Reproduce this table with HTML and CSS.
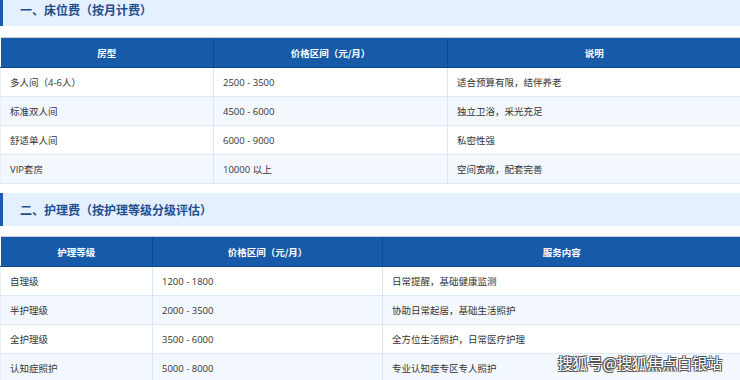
FILE: index.html
```html
<!DOCTYPE html>
<html lang="zh-CN">
<head>
<meta charset="utf-8">
<title>费用</title>
<link rel="stylesheet" href="styles.css">
</head>
<body>
<div class="page">
  <h2 class="section-title first">一、床位费（按月计费）</h2>
  <table class="fee-table t1">
    <colgroup><col class="c1"><col class="c2"><col class="c3"></colgroup>
    <thead><tr><th>房型</th><th>价格区间（元/月）</th><th>说明</th></tr></thead>
    <tbody>
      <tr><td>多人间（4-6人）</td><td>2500 - 3500</td><td>适合预算有限，结伴养老</td></tr>
      <tr><td>标准双人间</td><td>4500 - 6000</td><td>独立卫浴，采光充足</td></tr>
      <tr><td>舒适单人间</td><td>6000 - 9000</td><td>私密性强</td></tr>
      <tr><td>VIP套房</td><td>10000 以上</td><td>空间宽敞，配套完善</td></tr>
    </tbody>
  </table>
  <h2 class="section-title">二、护理费（按护理等级分级评估）</h2>
  <table class="fee-table t2">
    <colgroup><col class="c1"><col class="c2"><col class="c3"></colgroup>
    <thead><tr><th>护理等级</th><th>价格区间（元/月）</th><th>服务内容</th></tr></thead>
    <tbody>
      <tr><td>自理级</td><td>1200 - 1800</td><td>日常提醒，基础健康监测</td></tr>
      <tr><td>半护理级</td><td>2000 - 3500</td><td>协助日常起居，基础生活照护</td></tr>
      <tr><td>全护理级</td><td>3500 - 6000</td><td>全方位生活照护，日常医疗护理</td></tr>
      <tr><td>认知症照护</td><td>5000 - 8000</td><td>专业认知症专区专人照护</td></tr>
    </tbody>
  </table>
  <div class="watermark">搜狐号@搜狐焦点白银站</div>
</div>
</body>
</html>
```

FILE: styles.css
```css
html, body {
  margin: 0;
  padding: 0;
  background: #fff;
}
body {
  font-family: "Open Sans", "Noto Sans CJK SC", sans-serif;
  color: #333;
  overflow: hidden;
}
.page {
  position: relative;
  width: 740px;
  height: 380px;
  overflow: hidden;
}
.section-title {
  margin: 9px 0 10px 0;
  height: 33px;
  box-sizing: border-box;
  display: flex;
  align-items: center;
  padding-left: 17px;
  background: #e4f0fd;
  border-left: 3px solid #1a5aa8;
  color: #1e4e8c;
  font-size: 12px;
  font-weight: 700;
  font-family: "Noto Sans CJK SC", sans-serif;
}
.section-title.first {
  margin-top: -7px;
  margin-bottom: 11px;
}
.fee-table {
  width: 740px;
  border-collapse: collapse;
  table-layout: fixed;
  font-size: 9.5px;
}
.t1 .c1 { width: 213px; }
.t1 .c2 { width: 234px; }
.t1 .c3 { width: 293px; }
.t2 .c1 { width: 152px; }
.t2 .c2 { width: 230px; }
.t2 .c3 { width: 358px; }
.fee-table th {
  height: 29px;
  padding: 0;
  background: #175aa8;
  color: #fff;
  font-weight: 700;
  font-family: "Noto Sans CJK SC", sans-serif;
  text-align: center;
  border-top: 1px solid #c5cfdb;
  border-bottom: 1px solid #0f4688;
  border-left: 1px solid #0f4a8e;
}
.fee-table th:first-child { border-left: none; }
.fee-table td {
  height: 28px;
  padding: 0 8px 0 9px;
  border-bottom: 1px solid #dce9f7;
  border-left: 1px solid #d6e6f6;
  vertical-align: middle;
  color: #333;
}
.fee-table td:first-child { border-left: 1px solid #e8f0f8; }
.fee-table tbody tr:nth-child(even) td { background: #f3f8fe; }
.watermark {
  position: absolute;
  right: 18px;
  bottom: 7px;
  font-family: "Noto Sans CJK SC", sans-serif;
  font-size: 15px;
  color: #fff;
  text-shadow: -1px -1px 0 #555, 1px -1px 0 #555, -1px 1px 0 #555, 1px 1px 0 #555;
}
```
